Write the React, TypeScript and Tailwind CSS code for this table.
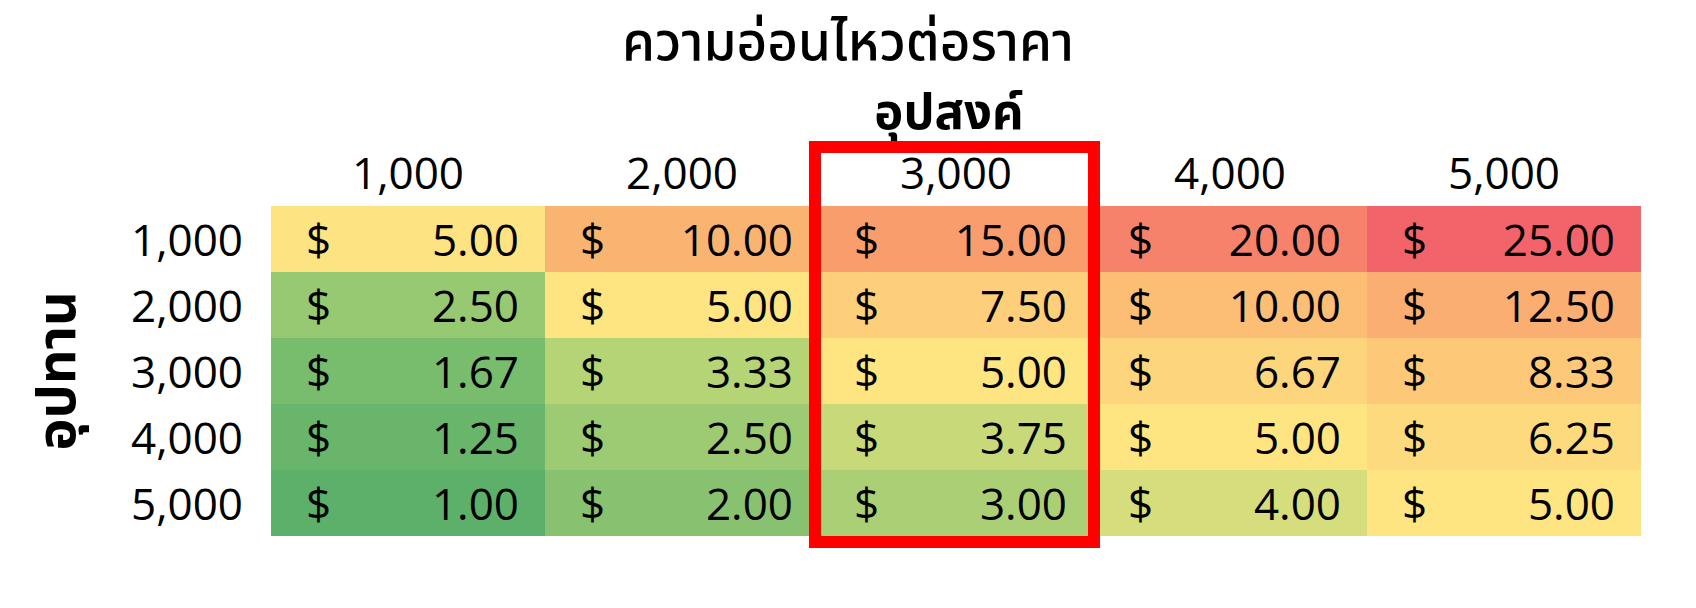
const FONT =
  "font-['Open_Sans','Noto_Sans_Thai','Noto_Sans_Thai_UI','Loma','Garuda','Tlwg_Typo','Waree',sans-serif]";

const COLS = ["1,000", "2,000", "3,000", "4,000", "5,000"];

const ROWS = [
  {
    label: "1,000",
    cells: [
      { v: "5.00", bg: "bg-[#FEE382]" },
      { v: "10.00", bg: "bg-[#FAB472]" },
      { v: "15.00", bg: "bg-[#F99D6C]" },
      { v: "20.00", bg: "bg-[#F6826B]" },
      { v: "25.00", bg: "bg-[#F2646A]" },
    ],
  },
  {
    label: "2,000",
    cells: [
      { v: "2.50", bg: "bg-[#97C872]" },
      { v: "5.00", bg: "bg-[#FEE581]" },
      { v: "7.50", bg: "bg-[#FDCF7A]" },
      { v: "10.00", bg: "bg-[#FCBD75]" },
      { v: "12.50", bg: "bg-[#FBAE71]" },
    ],
  },
  {
    label: "3,000",
    cells: [
      { v: "1.67", bg: "bg-[#78BC6E]" },
      { v: "3.33", bg: "bg-[#B5D476]" },
      { v: "5.00", bg: "bg-[#FEE581]" },
      { v: "6.67", bg: "bg-[#FDD57C]" },
      { v: "8.33", bg: "bg-[#FDC978]" },
    ],
  },
  {
    label: "4,000",
    cells: [
      { v: "1.25", bg: "bg-[#68B56B]" },
      { v: "2.50", bg: "bg-[#9CCB73]" },
      { v: "3.75", bg: "bg-[#C8D97A]" },
      { v: "5.00", bg: "bg-[#FEE581]" },
      { v: "6.25", bg: "bg-[#FEDA7E]" },
    ],
  },
  {
    label: "5,000",
    cells: [
      { v: "1.00", bg: "bg-[#5CB069]" },
      { v: "2.00", bg: "bg-[#88C270]" },
      { v: "3.00", bg: "bg-[#AACF75]" },
      { v: "4.00", bg: "bg-[#D6DD7D]" },
      { v: "5.00", bg: "bg-[#FEE581]" },
    ],
  },
];

export default function App() {
  return (
    <div className={`relative h-[608px] w-[1696px] overflow-hidden bg-white text-black ${FONT}`}>
      {/* title */}
      <div className="pt-[10px] text-center text-[53px] font-medium leading-[60px]">ความอ่อนไหวต่อราคา</div>

      {/* demand axis */}
      <div className="ml-[812px] mt-[10px] w-[274px] text-center text-[49px] font-bold leading-[60px]">
        อุปสงค์
      </div>

      <div className="grid grid-cols-[120px_151px_repeat(5,274px)]">
        {/* column headers */}
        <div />
        <div />
        {COLS.map((c) => (
          <div key={c} className="h-[66px] pt-[2px] text-center text-[44px] leading-[60px]">
            {c}
          </div>
        ))}

        {/* supply axis label */}
        <div className="row-span-5 flex items-center justify-center pr-[12px]">
          <span className="rotate-180 text-[54px] font-bold leading-none [writing-mode:vertical-rl]">อุปทาน</span>
        </div>

        {ROWS.map((r) => (
          <div key={r.label} className="contents">
            <div className="flex h-[66px] items-center justify-end pr-[28px] text-[44px]">{r.label}</div>
            {r.cells.map((c, i) => (
              <div key={i} className={`flex h-[66px] items-center justify-between pl-[35px] pr-[26px] text-[44px] ${c.bg}`}>
                <span>$</span>
                <span>{c.v}</span>
              </div>
            ))}
          </div>
        ))}
      </div>

      {/* highlight box */}
      <div className="pointer-events-none absolute left-[809px] top-[141px] h-[407px] w-[291px] border-[12px] border-[#FF0000]" />
    </div>
  );
}
